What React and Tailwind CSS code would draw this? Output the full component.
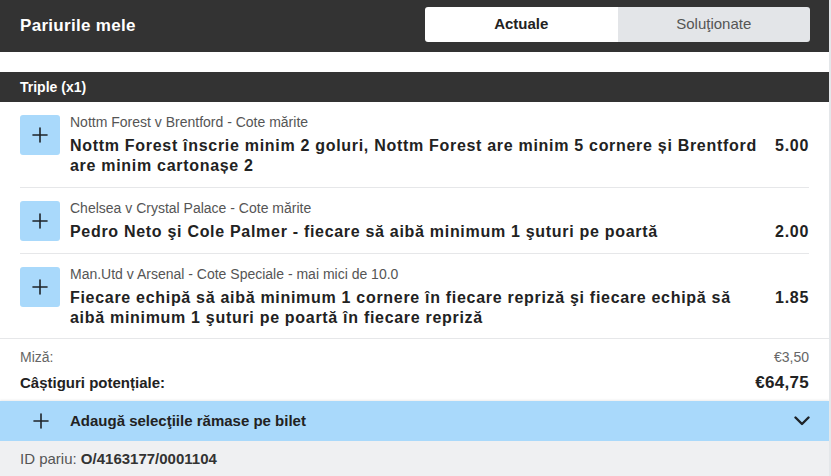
import { Plus } from "lucide-react";

const selections = [
    {
        event: "Nottm Forest v Brentford - Cote mărite",
        market: "Nottm Forest înscrie minim 2 goluri, Nottm Forest are minim 5 cornere și Brentford are minim cartonașe 2",
        odds: "5.00",
    },
    {
        event: "Chelsea v Crystal Palace - Cote mărite",
        market: "Pedro Neto şi Cole Palmer - fiecare să aibă minimum 1 şuturi pe poartă",
        odds: "2.00",
    },
    {
        event: "Man.Utd v Arsenal - Cote Speciale - mai mici de 10.0",
        market: "Fiecare echipă să aibă minimum 1 cornere în fiecare repriză şi fiecare echipă să aibă minimum 1 şuturi pe poartă în fiecare repriză",
        odds: "1.85",
    },
];

function Selection({ item, last }) {
    return (
        <div className={"flex items-start gap-[10px] pt-[13px] " + (last ? "pb-[10px]" : "pb-[11px] border-b border-[#e6e7e9]")}>
            <div className="w-[40px] h-[40px] shrink-0 rounded-[3px] bg-[#a9d9fb] flex items-center justify-center">
                <Plus size={24} strokeWidth={1.6} className="text-[#1e2328]" />
            </div>
            <div className="flex-1 min-w-0">
                <div className="text-[14px] leading-[17px] text-[#555] -mt-[1px]">{item.event}</div>
                <div className="flex items-start gap-3 mt-[5px]">
                    <div className="flex-1 text-[16px] leading-[20px] font-bold tracking-[0.7px] text-[#222]">{item.market}</div>
                    <div className="text-[16px] leading-[20px] font-bold tracking-[0.7px] text-[#222]">{item.odds}</div>
                </div>
            </div>
        </div>
    );
}

export default function App() {
    return (
        <div className="w-[831px] h-[476px] overflow-hidden bg-white border-r-2 border-[#e4e7ea]" style={{ fontFamily: '"Liberation Sans", Arial, sans-serif' }}>
            {/* header */}
            <div className="h-[52px] bg-[#333333] flex items-center justify-between pl-5 pr-[19px]">
                <h1 className="text-[17px] tracking-[0.3px] font-bold text-white">Pariurile mele</h1>
                <div className="flex w-[385px] h-[35px] rounded-[3px] overflow-hidden mb-[3px]">
                    <div className="flex-1 bg-white flex items-center justify-center text-[15px] font-bold text-[#222]">Actuale</div>
                    <div className="flex-1 bg-[#e3e5e8] flex items-center justify-center text-[15px] text-[#555]">Soluţionate</div>
                </div>
            </div>

            <div className="h-[20px]" />

            <div className="h-[30px] bg-[#333333] flex items-center px-5 text-[14px] font-bold text-white">Triple (x1)</div>

            <div className="px-5">
                {selections.map((s, i) => (
                    <Selection key={i} item={s} last={i === selections.length - 1} />
                ))}
            </div>

            {/* totals */}
            <div className="border-t border-[#e6e7e9] px-5 pt-[10px] pb-[7px]">
                <div className="flex justify-between text-[14px] leading-[17px] text-[#666]">
                    <span>Miză:</span>
                    <span>€3,50</span>
                </div>
                <div className="flex justify-between items-center h-[22px] mt-[6px]">
                    <span className="text-[15px] font-bold text-[#222]">Câștiguri potențiale:</span>
                    <span className="text-[17px] tracking-[0.3px] font-bold text-[#222]">€64,75</span>
                </div>
            </div>

            <div className="h-[40px] bg-[#a9d9fb] flex items-center pl-[29px] pr-[19px] shadow-[0_-1px_2px_rgba(0,0,0,0.08)]">
                <Plus size={24} strokeWidth={1.6} className="text-[#1e2328]" />
                <span className="ml-[17px] flex-1 text-[15px] font-bold text-[#222]">Adaugă selecţiile rămase pe bilet</span>
                <svg width="16" height="10" viewBox="0 0 16 10" fill="none" stroke="#1e2328" strokeWidth="2.4" strokeLinecap="round" strokeLinejoin="round">
                    <path d="M1.5 1.5 L8 8 L14.5 1.5" />
                </svg>
            </div>

            <div className="h-[36px] bg-[#eff0f2] flex items-center px-5 text-[15px] text-[#555]">
                ID pariu:&nbsp;<span className="font-bold text-[#333]">O/4163177/0001104</span>
            </div>
        </div>
    );
}
